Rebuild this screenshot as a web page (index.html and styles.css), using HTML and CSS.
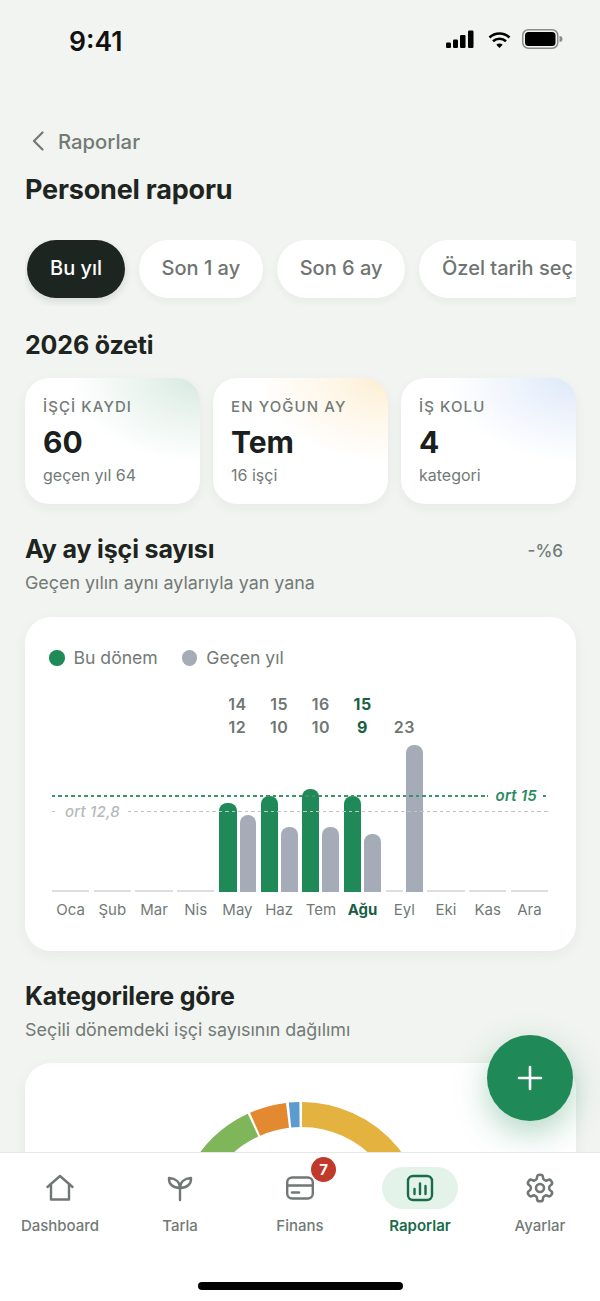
FILE: index.html
```html
<!DOCTYPE html>
<html lang="tr">
<head>
<meta charset="utf-8">
<title>Personel raporu</title>
<link rel="stylesheet" href="styles.css">
</head>
<body>
<div class="phone">
  <div class="status">
    <span class="time">9:41</span>
    <div class="status-icons">
      <svg class="signal" width="29" height="19" viewBox="0 0 29 19"><rect x="0" y="12.5" width="5" height="5.5" rx="1.2"/><rect x="7" y="9.5" width="5" height="8.5" rx="1.2"/><rect x="14" y="5" width="5.5" height="13" rx="1.2"/><rect x="22" y="0.5" width="5.5" height="17.5" rx="1.2"/></svg>
      <svg class="wifi" width="23" height="18" viewBox="0 0 23 18"><path d="M1.5 6.5a14.5 14.5 0 0 1 20 0M5 10.3a9.5 9.5 0 0 1 13 0" fill="none" stroke="#000" stroke-width="2.6"/><path d="M8.3 13.7a4.6 4.6 0 0 1 6.4 0L11.5 17z" fill="#000"/></svg>
      <svg class="battery" width="41" height="20" viewBox="0 0 41 20"><rect x="0.75" y="0.75" width="35" height="18.5" rx="5.5" fill="none" stroke="#8b8d8c" stroke-width="1.5"/><rect x="3" y="3" width="30.5" height="14" rx="3.5" fill="#000"/><path d="M37.5 7a3 3 0 0 1 0 6z" fill="#8b8d8c"/></svg>
    </div>
  </div>

  <main class="content">
    <div class="back">
      <svg width="14" height="20" viewBox="0 0 14 20"><path d="M11.5 1.5 3 10l8.5 8.5" fill="none" stroke="#727a74" stroke-width="2.2" stroke-linecap="round" stroke-linejoin="round"/></svg>
      <span>Raporlar</span>
    </div>
    <h1 class="title">Personel raporu</h1>

    <div class="chips">
      <span class="chip chip-on">Bu yıl</span>
      <span class="chip">Son 1 ay</span>
      <span class="chip">Son 6 ay</span>
      <span class="chip">Özel tarih seç</span>
    </div>

    <h2 class="heading heading-first">2026 özeti</h2>
    <div class="stats">
      <div class="stat stat-green">
        <div class="stat-label">İŞÇİ KAYDI</div>
        <div class="stat-value">60</div>
        <div class="stat-note">geçen yıl 64</div>
      </div>
      <div class="stat stat-amber">
        <div class="stat-label">EN YOĞUN AY</div>
        <div class="stat-value">Tem</div>
        <div class="stat-note">16 işçi</div>
      </div>
      <div class="stat stat-blue">
        <div class="stat-label">İŞ KOLU</div>
        <div class="stat-value">4</div>
        <div class="stat-note">kategori</div>
      </div>
    </div>

    <div class="heading-row">
      <h2 class="heading">Ay ay işçi sayısı</h2>
      <span class="delta">-%6</span>
    </div>
    <p class="sub">Geçen yılın aynı aylarıyla yan yana</p>

    <section class="card chart-card">
      <div class="legend">
        <span class="legend-item"><i class="dot dot-green"></i>Bu dönem</span>
        <span class="legend-item"><i class="dot dot-gray"></i>Geçen yıl</span>
      </div>
      <div class="chart">
        <div class="col"><div class="vals"></div><div class="plot"><i class="empty"></i></div><div class="month">Oca</div></div>
        <div class="col"><div class="vals"></div><div class="plot"><i class="empty"></i></div><div class="month">Şub</div></div>
        <div class="col"><div class="vals"></div><div class="plot"><i class="empty"></i></div><div class="month">Mar</div></div>
        <div class="col"><div class="vals"></div><div class="plot"><i class="empty"></i></div><div class="month">Nis</div></div>
        <div class="col"><div class="vals"><span>14</span><span>12</span></div><div class="plot"><i class="bar bar-green bar-wide" style="height:89px"></i><i class="bar bar-gray" style="height:77px"></i></div><div class="month">May</div></div>
        <div class="col"><div class="vals"><span>15</span><span>10</span></div><div class="plot"><i class="bar bar-green" style="height:96px"></i><i class="bar bar-gray" style="height:65px"></i></div><div class="month">Haz</div></div>
        <div class="col"><div class="vals"><span>16</span><span>10</span></div><div class="plot"><i class="bar bar-green" style="height:103px"></i><i class="bar bar-gray" style="height:65px"></i></div><div class="month">Tem</div></div>
        <div class="col col-on"><div class="vals"><span>15</span><span>9</span></div><div class="plot"><i class="bar bar-green" style="height:96px"></i><i class="bar bar-gray" style="height:58px"></i></div><div class="month">Ağu</div></div>
        <div class="col"><div class="vals"><span>23</span></div><div class="plot"><i class="empty"></i><i class="bar bar-gray" style="height:147px"></i></div><div class="month">Eyl</div></div>
        <div class="col"><div class="vals"></div><div class="plot"><i class="empty"></i></div><div class="month">Eki</div></div>
        <div class="col"><div class="vals"></div><div class="plot"><i class="empty"></i></div><div class="month">Kas</div></div>
        <div class="col"><div class="vals"></div><div class="plot"><i class="empty"></i></div><div class="month">Ara</div></div>
        <div class="avg avg-green"><i class="dash dash-fill"></i><span class="avg-label">ort 15</span><i class="dash dash-end"></i></div>
        <div class="avg avg-gray"><i class="dash dash-start"></i><span class="avg-label">ort 12,8</span><i class="dash dash-fill"></i></div>
      </div>
    </section>

    <h2 class="heading heading-cat">Kategorilere göre</h2>
    <p class="sub">Seçili dönemdeki işçi sayısının dağılımı</p>

    <section class="card donut-card">
      <svg class="donut" width="252" height="252" viewBox="-126 -126 252 252">
        <g fill="none" stroke-width="25">
          <path stroke="#e3b23f" d="M1 -113.5A113.5 113.5 0 0 1 111.8 19.7"/>
          <path stroke="#5b9bd0" d="M-11 -113A113.5 113.5 0 0 1 -1.5 -113.5"/>
          <path stroke="#e38a30" d="M-45.9 -103.8A113.5 113.5 0 0 1 -13.5 -112.7"/>
          <path stroke="#7fb65a" d="M-111.8 19.7A113.5 113.5 0 0 1 -48 -102.9"/>
        </g>
      </svg>
    </section>
  </main>

  <button class="fab" type="button" aria-label="Ekle">
    <svg width="26" height="26" viewBox="0 0 26 26"><path d="M13 2v22M2 13h22" stroke="#fff" stroke-width="2.6" stroke-linecap="round"/></svg>
  </button>

  <nav class="nav">
    <div class="nav-item">
      <span class="nav-icon">
        <svg width="30" height="28" viewBox="0 0 30 28" fill="none" stroke="#717775" stroke-width="2.4" stroke-linecap="round" stroke-linejoin="round"><path d="M2.5 13 15 2l12.500 11"/><path d="M6 10.500V25.500H24V10.500"/></svg>
      </span>
      <span class="nav-label">Dashboard</span>
    </div>
    <div class="nav-item">
      <span class="nav-icon">
        <svg width="28" height="28" viewBox="0 0 28 28" fill="none" stroke="#717775" stroke-width="2.4" stroke-linecap="round" stroke-linejoin="round"><path d="M14 26V14"/><path d="M14 14C14 8 9.500 4.500 3 4c-.5 6 4 10 11 10z"/><path d="M14 14c0-6 4.500-9.500 11-10 .5 6-4 10-11 10z"/></svg>
      </span>
      <span class="nav-label">Tarla</span>
    </div>
    <div class="nav-item">
      <span class="nav-icon">
        <svg width="30" height="26" viewBox="0 0 30 26" fill="none" stroke="#717775" stroke-width="2.4" stroke-linecap="round"><rect x="2.200" y="2.500" width="25.600" height="21" rx="5"/><path d="M2.200 10.500H27.800"/><path d="M7 17.500H14"/></svg>
        <b class="badge">7</b>
      </span>
      <span class="nav-label">Finans</span>
    </div>
    <div class="nav-item nav-on">
      <span class="nav-icon">
        <i class="pill"></i>
        <svg class="nav-svg" width="28" height="28" viewBox="0 0 28 28" fill="none" stroke="#1a6b4a" stroke-width="2.400" stroke-linecap="round"><rect x="2" y="2" width="24" height="24" rx="5"/><path d="M8.500 20v-5M14 20V9.500M19.500 20v-8"/></svg>
      </span>
      <span class="nav-label">Raporlar</span>
    </div>
    <div class="nav-item">
      <span class="nav-icon">
        <svg width="32" height="32" viewBox="0 0 24 24" fill="none" stroke="#717775" stroke-width="1.900" stroke-linecap="round" stroke-linejoin="round"><path d="M12.220 2h-.44a2 2 0 0 0-2 2v.18a2 2 0 0 1-1 1.730l-.43.25a2 2 0 0 1-2 0l-.15-.08a2 2 0 0 0-2.730.73l-.22.38a2 2 0 0 0 .73 2.730l.15.1a2 2 0 0 1 1 1.720v.51a2 2 0 0 1-1 1.740l-.15.09a2 2 0 0 0-.73 2.730l.22.38a2 2 0 0 0 2.730.73l.15-.08a2 2 0 0 1 2 0l.43.25a2 2 0 0 1 1 1.730V20a2 2 0 0 0 2 2h.44a2 2 0 0 0 2-2v-.18a2 2 0 0 1 1-1.730l.43-.25a2 2 0 0 1 2 0l.15.08a2 2 0 0 0 2.730-.73l.22-.39a2 2 0 0 0-.73-2.730l-.15-.08a2 2 0 0 1-1-1.740v-.5a2 2 0 0 1 1-1.740l.15-.09a2 2 0 0 0 .73-2.730l-.22-.38a2 2 0 0 0-2.730-.73l-.15.08a2 2 0 0 1-2 0l-.43-.25a2 2 0 0 1-1-1.730V4a2 2 0 0 0-2-2z"/><circle cx="12" cy="12" r="3"/></svg>
      </span>
      <span class="nav-label">Ayarlar</span>
    </div>
    <i class="home-bar"></i>
  </nav>
</div>
</body>
</html>
```

FILE: styles.css
```css
* { box-sizing: border-box; }
html, body { margin: 0; padding: 0; }
body { background: #f1f4f0; font-family: "Inter", "Liberation Sans", sans-serif; color: #1e2420; }
i { display: block; font-style: normal; }

.phone { position: relative; width: 600px; height: 1301px; overflow: hidden; background: #f1f4f0; }

.status { height: 82px; display: flex; justify-content: space-between; align-items: flex-start; padding: 0 37px 0 69px; }
.time { font-size: 26.500px; line-height: 33px; font-weight: 600; color: #111; margin-top: 25px; }
.status-icons { display: flex; align-items: flex-start; margin-top: 29px; }
.signal { fill: #000; margin: 1px 13px 0 0; }
.wifi { margin: 2px 11px 0 0; }

.content { padding: 0 24px 0 25px; }
.back { height: 30px; margin-top: 44px; display: flex; align-items: center; gap: 13px; padding-left: 6px; font-size: 20.300px; font-weight: 500; color: #727a74; }
.title { margin: 17px 0 0; font-size: 27px; line-height: 34px; font-weight: 700; letter-spacing: -0.2px; }

.chips { display: flex; gap: 13.500px; margin-top: 33px; padding-left: 2px; width: 551px; height: 66px; overflow: hidden; }
.chip { flex: none; height: 58px; display: flex; align-items: center; padding: 0 23px 2px; border-radius: 29px; background: #fff; box-shadow: 0 3px 8px rgba(40, 50, 40, .05); font-size: 20px; font-weight: 500; color: #6e7571; white-space: nowrap; }
.chip-on { background: #1d2521; color: #fff; box-shadow: 0 3px 8px rgba(40, 50, 40, .14); }

.heading { margin: 0; font-size: 25px; line-height: 32px; font-weight: 700; letter-spacing: -0.15px; }
.heading-first { margin-top: 23px; }
.heading-row { display: flex; justify-content: space-between; align-items: center; margin-top: 29px; padding-right: 13px; }
.heading-cat { margin-top: 29px; }
.delta { font-size: 17px; font-weight: 500; color: #737a76; padding-top: 4px; }
.sub { margin: 6px 0 0; font-size: 17.900px; line-height: 24px; color: #727a76; }

.stats { display: grid; grid-template-columns: repeat(3, 1fr); gap: 13px; margin-top: 17px; }
.stat { height: 126px; border-radius: 24px; padding: 19px 18px; background-color: #fff; box-shadow: 0 4px 12px rgba(40, 50, 40, .05); }
.stat-green { background-image: radial-gradient(ellipse 130px 85px at 100% 0, #d6e9df 0, rgba(214, 233, 223, .5) 45%, rgba(214, 233, 223, 0) 100%); }
.stat-amber { background-image: radial-gradient(ellipse 130px 85px at 100% 0, #fdeed2 0, rgba(253, 238, 210, .5) 45%, rgba(253, 238, 210, 0) 100%); }
.stat-blue { background-image: radial-gradient(ellipse 130px 85px at 100% 0, #dde8f9 0, rgba(221, 232, 249, .5) 45%, rgba(221, 232, 249, 0) 100%); }
.stat-label { font-size: 15px; line-height: 20px; font-weight: 500; letter-spacing: 1.100px; color: #737a76; }
.stat-value { margin-top: 6px; font-size: 30px; line-height: 38px; font-weight: 700; color: #1a201d; }
.stat-note { margin-top: 3px; font-size: 16px; line-height: 22px; color: #727a76; }

.card { background: #fff; border-radius: 26px; box-shadow: 0 4px 14px rgba(40, 50, 40, .05); }
.chart-card { height: 334px; margin-top: 22px; padding: 29px 28px 0 27px; }

.legend { display: flex; gap: 24px; margin-left: -3px; font-size: 17.600px; line-height: 24px; color: #727a76; }
.legend-item { display: flex; align-items: center; gap: 9px; }
.dot { width: 15.500px; height: 15.500px; border-radius: 50%; }
.dot-green { background: #1f8a57; }
.dot-gray { background: #a5acb7; }

.chart { position: relative; display: grid; grid-template-columns: repeat(12, 1fr); column-gap: 4.500px; margin-top: 23px; }
.col { min-width: 0; }
.vals { height: 46px; display: flex; flex-direction: column; justify-content: flex-end; align-items: center; font-size: 16px; line-height: 23px; font-weight: 600; color: #6f7673; letter-spacing: .5px; }
.plot { height: 152.500px; display: flex; align-items: flex-end; gap: 3px; }
.month { margin-top: 8px; text-align: center; font-size: 15px; line-height: 20px; color: #727a76; white-space: nowrap; }
.col-on .vals, .col-on .month { color: #1a5f45; font-weight: 700; }
.bar { flex: 1 1 0; border-radius: 8px 8px 0 0; }
.bar-wide { flex-grow: 1.200; }
.bar-green { background: #1f8a57; }
.bar-gray { background: #a5acb7; }
.empty { flex: 1 1 0; height: 1.500px; background: #dcdfde; }

.avg { position: absolute; left: 0; right: 0; display: flex; align-items: center; height: 20px; }
.avg-green { bottom: 113.500px; color: #3a9469; }
.avg-gray { bottom: 98px; color: #c0c4c5; }
.avg-label { font-size: 15px; line-height: 20px; font-style: italic; font-weight: 600; padding: 0 6px 0 8px; letter-spacing: .2px; color: #2b8a5e; }
.avg-gray .avg-label { font-weight: 500; padding: 0 8px; color: #b5babb; }
.dash { height: 1.500px; background: repeating-linear-gradient(90deg, currentColor 0 3.500px, transparent 3.500px 6.500px); }
.dash-fill { flex: 1; }
.dash-end { width: 5px; }
.dash-start { width: 5px; }

.donut-card { height: 300px; margin-top: 21px; padding-top: 39px; }
.donut { display: block; margin: 0 auto; }

.fab { position: absolute; left: 487px; top: 1035px; width: 86px; height: 86px; padding: 0; border: 0; border-radius: 50%; background: #1f8a57; display: flex; align-items: center; justify-content: center; box-shadow: 0 12px 32px rgba(31, 138, 87, .34); }

.nav { position: absolute; left: 0; right: 0; top: 1152px; bottom: 0; display: grid; grid-template-columns: repeat(5, 120px); align-content: start; background: #fff; border-top: 1.500px solid #e6e8e6; }
.nav-item { display: flex; flex-direction: column; align-items: center; padding-top: 14px; }
.nav-icon { position: relative; height: 42px; width: 76px; display: flex; align-items: center; justify-content: center; }
.nav-label { margin-top: 6px; font-size: 15px; line-height: 22px; font-weight: 500; color: #727a76; }
.nav-on .nav-label { color: #1a6b4a; font-weight: 600; }
.pill { position: absolute; inset: 0; border-radius: 21px; background: #e3f3ea; }
.nav-svg { position: relative; }
.badge { position: absolute; left: 49px; top: -10px; width: 25px; height: 25px; border-radius: 50%; background: #c0392b; color: #fff; font-size: 15px; line-height: 25px; font-weight: 700; text-align: center; }
.home-bar { position: absolute; left: 198px; top: 128.500px; width: 205px; height: 8px; border-radius: 4px; background: #000; }
```
